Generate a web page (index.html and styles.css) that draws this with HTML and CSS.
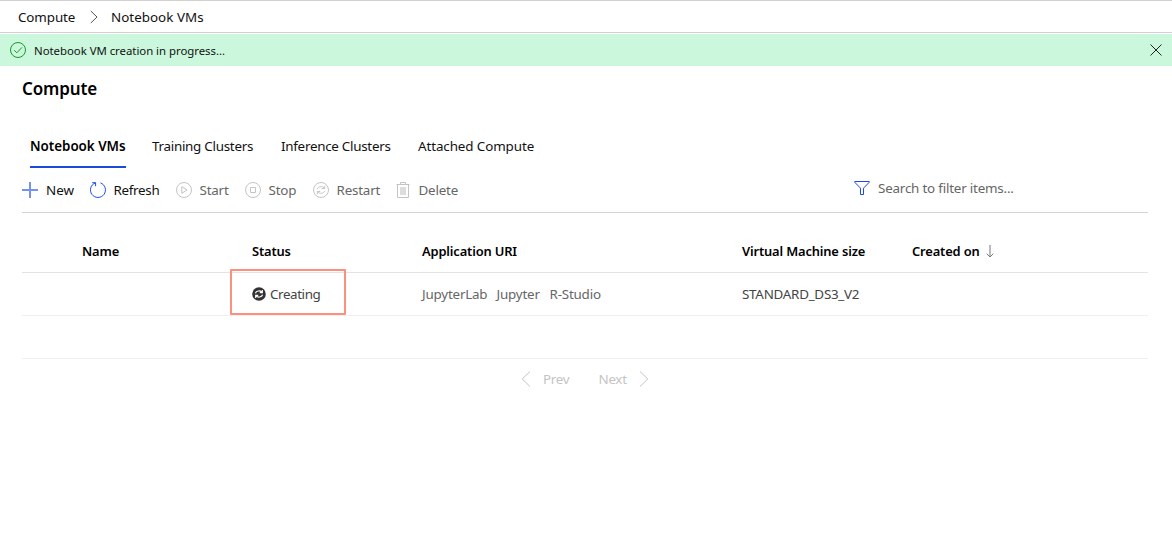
FILE: index.html
```
<!DOCTYPE html>
<html lang="en">
<head>
<meta charset="utf-8">
<title>Compute - Notebook VMs</title>
<link rel="stylesheet" href="styles.css">
</head>
<body>
<nav class="breadcrumb">
  <span class="crumb">Compute</span>
  <svg class="crumb-sep" width="8" height="14" viewBox="0 0 8 14"><path d="M.8 1 7 7 .8 13"/></svg>
  <span class="crumb-current">Notebook VMs</span>
</nav>
<div class="banner">
  <svg class="ok" width="16" height="16" viewBox="0 0 16 16"><circle cx="8" cy="8" r="7.5"/><path d="M4.2 8.2 6.8 10.8 12 5.4"/></svg>
  <span class="banner-text">Notebook VM creation in progress...</span>
  <svg class="close" width="12" height="12" viewBox="0 0 12 12"><path d="M.5.5 11.5 11.5M11.5.5.5 11.5"/></svg>
</div>
<main class="page">
  <h1 class="title">Compute</h1>
  <div class="tabs">
    <span class="tab tab-active">Notebook VMs</span>
    <span class="tab tab-training">Training Clusters</span>
    <span class="tab tab-inference">Inference Clusters</span>
    <span class="tab tab-attached">Attached Compute</span>
  </div>
  <div class="toolbar">
    <div class="command command-new">
      <svg class="icon blue plus" width="16" height="16" viewBox="0 0 16 16"><path d="M8 0V16M0 8H16"/></svg><span>New</span>
    </div>
    <div class="command command-refresh">
      <svg class="icon blue" width="16" height="16" viewBox="0 0 16 16"><path d="M10.5.9A7.5 7.5 0 1 1 5.4.9M2.2.7H5.6V4.2"/></svg><span>Refresh</span>
    </div>
    <div class="command command-start disabled">
      <svg class="icon" width="16" height="16" viewBox="0 0 16 16"><circle cx="8" cy="8" r="7.5"/><path d="M5.8 4.7V11.3L11 8Z"/></svg><span>Start</span>
    </div>
    <div class="command command-stop disabled">
      <svg class="icon" width="16" height="16" viewBox="0 0 16 16"><circle cx="8" cy="8" r="7.5"/><path d="M5.5 5.5H10.5V10.5H5.5Z"/></svg><span>Stop</span>
    </div>
    <div class="command command-restart disabled">
      <svg class="icon" width="16" height="16" viewBox="0 0 16 16"><circle cx="8" cy="8" r="7.5"/><path d="M4.2 7.2C5.3 4.2 9.6 3.9 11.4 6.2M11.7 3.8V6.5H8.8M11.8 8.8C10.7 11.8 6.4 12.1 4.6 9.8M4.3 12.2V9.5H7.2"/></svg><span>Restart</span>
    </div>
    <div class="command disabled">
      <svg class="icon trash" width="14" height="16" viewBox="0 0 14 16"><path d="M.5 2.5H13.5M4.5 2.5V.5H9.5V2.5M1.5 2.5V15.5H12.5V2.5"/><path class="bin" d="M4 5H10V13H4Z"/></svg><span>Delete</span>
    </div>
    <div class="filter">
      <svg class="icon blue" width="16" height="14" viewBox="0 0 16 14"><path d="M.7.5H15.3V1.2L9.5 7.2V13.5H6.5V7.2L.7 1.2Z"/></svg><span>Search to filter items...</span>
    </div>
  </div>
  <div class="grid grid-head">
    <span>Name</span>
    <span>Status</span>
    <span>Application URI</span>
    <span>Virtual Machine size</span>
    <span>Created on<svg class="sort" width="8" height="13" viewBox="0 0 8 13"><path d="M4 0V12M.7 8.7 4 12 7.3 8.7"/></svg></span>
  </div>
  <div class="grid grid-row">
    <span></span>
    <span class="status"><svg class="status-icon" width="14" height="14" viewBox="0 0 14 14"><circle cx="7" cy="7" r="6.8"/><path d="M3.4 6.3C4.4 3.5 8.2 3.3 9.8 5.1M10.3 3.1V5.6H7.8M10.6 7.7C9.6 10.5 5.8 10.7 4.2 8.9M3.7 10.9V8.4H6.2"/></svg><span class="status-text">Creating</span></span>
    <span class="links"><span class="l-lab">JupyterLab</span><span class="l-jup">Jupyter</span><span>R-Studio</span></span>
    <span class="vm-size">STANDARD_DS3_V2</span>
    <span></span>
  </div>
  <div class="grid-space"></div>
  <div class="pager">
    <svg width="10" height="16" viewBox="0 0 10 16"><path d="M9 .5 1.2 8 9 15.5"/></svg>
    <span class="prev">Prev</span>
    <span class="next">Next</span>
    <svg width="10" height="16" viewBox="0 0 10 16"><path d="M1 .5 8.8 8 1 15.5"/></svg>
  </div>
</main>
</body>
</html>
```
FILE: styles.css
```
*, *::before { box-sizing: border-box; }
body {
  margin: 0;
  background: #fff;
  color: #111;
  font: 13.4px/20px "Noto Sans", "Open Sans", sans-serif;
  letter-spacing: -.1px;
  white-space: nowrap;
}
svg { flex: none; fill: none; stroke: currentColor; }
.breadcrumb {
  display: flex;
  align-items: center;
  height: 33px;
  padding: 0 0 0 18px;
  border-top: 1px solid #d2d0d2;
  border-bottom: 1px solid #d2d0d2;
}
.crumb { width: 57px; }
.crumb-sep { margin: 0 13px 0 15px; width: 8px; color: #555; }
.crumb-current { letter-spacing: .02px; }
.banner {
  display: flex;
  align-items: center;
  height: 32px;
  margin-top: 1px;
  padding: 0 10px;
  background: #cbf7dd;
  font-size: 11.4px;
  letter-spacing: -.03px;
}
.ok { margin-right: 8px; color: #159a28; }
.banner-text { padding-top: 2px; }
.close { margin-left: auto; color: #222; }
.page { padding: 0 24px 0 22px; }
.title { margin: 11px 0 0; font-size: 17px; line-height: 24px; font-weight: 600; color: #000; letter-spacing: -.15px; }
.tabs { display: flex; height: 34px; margin-top: 33px; padding-left: 8px; }
.tab { height: 34px; padding-top: 2px; }
.tab-active { width: 96px; margin-right: 26px; border-bottom: 2px solid #1b49d8; font-weight: 600; color: #000; letter-spacing: -.03px; }
.tab-training { width: 129px; letter-spacing: -.27px; }
.tab-inference { width: 137px; letter-spacing: -.27px; }
.tab-attached { letter-spacing: -.1px; }
.toolbar { display: flex; align-items: center; height: 45px; border-bottom: 1px solid #d4d4d4; }
.command { display: flex; align-items: center; gap: 8px; letter-spacing: -.2px; }
.command-new { width: 67.5px; letter-spacing: 0; }
.command-refresh { width: 86px; letter-spacing: -.3px; }
.command-start { width: 69px; }
.command-stop { width: 68px; }
.command-restart { width: 84px; }
.disabled { color: #666; }
.disabled .icon { color: #c4c4c4; }
.blue { color: #1b49ec; }
.plus { opacity: .6; stroke-width: 2; }
.trash .bin { fill: #ddd; stroke: none; }
.trash { margin: 0 1px 0 -1px; }
.filter { display: flex; align-items: center; gap: 8px; margin: 0 134px 4px auto; color: #666; letter-spacing: -.2px; }
.filter span { width: 136px; }
.grid { display: grid; grid-template-columns: 170px 170px 320px 170px 1fr; align-items: center; padding-left: 60px; }
.grid-head { height: 60px; padding-top: 17px; border-bottom: 1px solid #e4e4e4; font-size: 12.9px; font-weight: 600; color: #000; letter-spacing: -.15px; }
.grid-row { height: 43px; border-bottom: 1px solid #f0f0f0; color: #444; }
.sort { margin-left: 6px; vertical-align: -2px; color: #777; }
.status { position: relative; display: flex; align-items: center; gap: 4px; }
.status-text { letter-spacing: -.4px; }
.status::before {
  content: "";
  position: absolute;
  left: -22px;
  top: -15px;
  width: 116px;
  height: 46px;
  border: 2px solid #ff8f7d;
  border-radius: 1px;
}
.status-icon { color: #fff; stroke-width: 1.2; }
.status-icon circle { fill: #333; stroke: none; }
.links { display: flex; color: #666; letter-spacing: -.2px; }
.l-lab { width: 74.5px; }
.l-jup { width: 53px; }
.vm-size { letter-spacing: -.26px; }
.grid-space { height: 43px; border-bottom: 1px solid #f0f0f0; }
.pager { display: flex; align-items: center; height: 40px; padding-left: 499px; color: #c4c4c4; letter-spacing: -.3px; }
.prev { width: 55.5px; margin-left: 12px; }
.next { width: 40.5px; }
```
